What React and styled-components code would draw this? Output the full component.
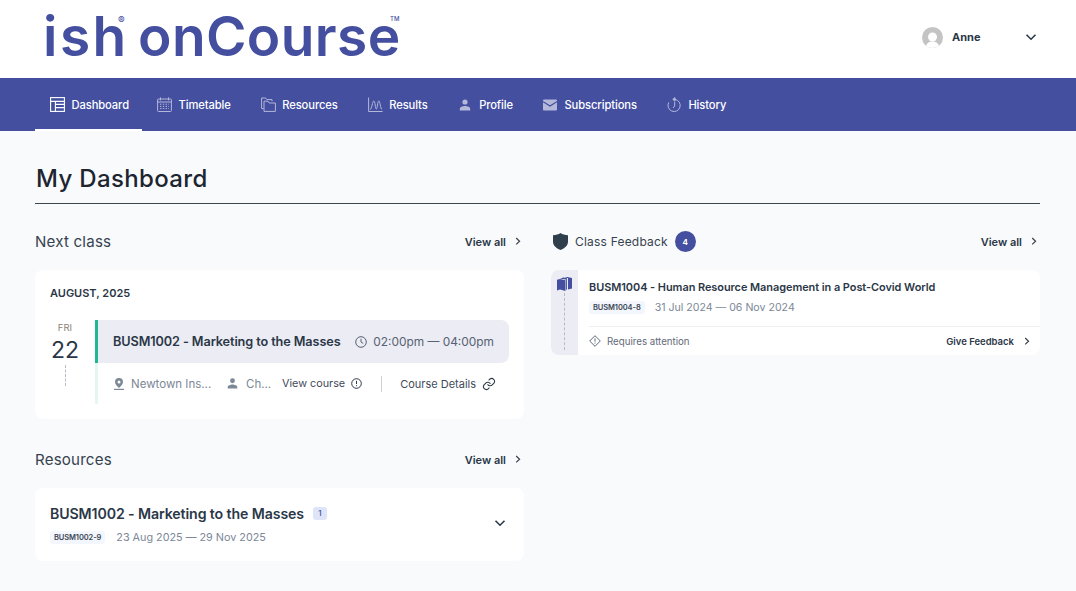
import React from 'react'
import styled, { createGlobalStyle } from 'styled-components'

const indigo = '#444fa0'
const ink = '#2b3747'
const muted = '#7c8797'

const Global = createGlobalStyle`
  html, body { margin: 0; padding: 0; background: #f8fafc; }
  body { font-family: Inter, "Noto Sans", sans-serif; color: ${ink}; }
  * { box-sizing: border-box; }
`

const Page = styled.div`
  width: 1076px;
  height: 591px;
  overflow: hidden;
  background: #f8fafc;
`
const Header = styled.header`
  height: 78px;
  background: #fff;
  display: flex;
  align-items: center;
  justify-content: space-between;
  padding: 0 39px 0 43px;
`
const Logo = styled.div`
  display: flex;
  color: ${indigo};
  font-size: 55px;
  line-height: 72px;
  font-weight: 600;
  height: 78px;
`
const LogoWord = styled.span`
  position: relative;
  display: block;
  width: ${p => p.$w}px;
  letter-spacing: ${p => p.$spacing}px;
  white-space: nowrap;
`
const LogoMark = styled.sup`
  position: absolute;
  left: ${p => p.$left}px;
  top: ${p => p.$top}px;
  font-size: ${p => p.$size}px;
  line-height: 1;
  letter-spacing: 0;
  font-weight: 500;
`
const User = styled.div`
  display: flex;
  align-items: center;
  font-size: 11px;
  font-weight: 700;
  padding-bottom: 4px;
`
const Avatar = styled.div`
  width: 21px;
  height: 21px;
  border-radius: 50%;
  overflow: hidden;
  margin-right: 9px;
  svg { display: block; }
`
const UserName = styled.span`
  width: 73px;
`
const Nav = styled.nav`
  height: 53px;
  background: ${indigo};
  display: flex;
  padding: 0 35px;
`
const NavItem = styled.a`
  display: flex;
  align-items: center;
  gap: 6.5px;
  padding: 0 ${p => (p.$active ? 13 : 15)}px 0 15px;
  color: #fff;
  font-size: 11.2px;
  font-weight: 500;
  letter-spacing: -0.1px;
  border-top: 2px solid transparent;
  border-bottom: 2px solid ${p => (p.$active ? '#fff' : 'transparent')};
`
const NavIcon = styled.span`
  width: 15px;
  height: 16px;
  display: flex;
  align-items: center;
  justify-content: center;
  opacity: ${p => (p.$active ? 1 : 0.6)};
  flex: none;
`
const Main = styled.main`
  padding: 33px 36px 0 35px;
`
const PageTitle = styled.h1`
  margin: 0 0 18px;
  height: 40px;
  border-bottom: 1px solid #3c4552;
  font-size: 24px;
  line-height: 30px;
  font-weight: 500;
  color: #1d2530;
  letter-spacing: 0.35px;
  padding-left: 1px;
`
const Columns = styled.div`
  display: grid;
  grid-template-columns: 489px 489px;
  gap: 27px;
`
const Column = styled.section`
  display: flex;
  flex-direction: column;
`
const SectionHead = styled.div`
  height: 48px;
  padding-bottom: 10px;
  display: flex;
  align-items: center;
  justify-content: space-between;
`
const SectionTitle = styled.h2`
  display: flex;
  align-items: center;
  margin: 0;
  font-size: ${p => p.$size}px;
  line-height: 20px;
  padding-top: 1px;
  font-weight: 400;
  letter-spacing: 0.2px;
  color: #37424f;
  svg { margin: 0 7px 0 2px; }
`
const CountBadge = styled.span`
  width: 21px;
  height: 21px;
  margin-left: 7px;
  border-radius: 50%;
  background: ${indigo};
  color: #fff;
  font-size: 8px;
  font-weight: 700;
  display: flex;
  align-items: center;
  justify-content: center;
`
const ViewAll = styled.a`
  display: flex;
  align-items: center;
  gap: 9px;
  font-size: 11px;
  font-weight: 600;
  color: ${ink};
  padding: 1px 3px 0 0;
`
const Card = styled.div`
  background: #fff;
  border-radius: 8px;
  overflow: hidden;
  margin-bottom: ${p => p.$mb || 0}px;
`
const ClassCard = styled(Card)`
  height: 149px;
  padding: 16px 15px;
`
const Month = styled.div`
  font-size: 11px;
  line-height: 14px;
  font-weight: 600;
  margin-bottom: 20px;
`
const ClassRow = styled.div`
  display: flex;
`
const DateCol = styled.div`
  width: 30px;
  margin-right: 15px;
  display: flex;
  flex-direction: column;
  align-items: center;
`
const Weekday = styled.div`
  font-size: 9.5px;
  line-height: 15px;
  color: #8b7f78;
`
const DayNum = styled.div`
  font-size: 23px;
  line-height: 30px;
  color: ${ink};
`
const DashLine = styled.div`
  border-left: 1px dashed #b6bcc6;
  height: ${p => p.$h}px;
  margin-top: ${p => p.$mt || 0}px;
`
const ClassBody = styled.div`
  width: 414px;
`
const ClassTop = styled.div`
  height: 43px;
  background: #ebecf4;
  border-left: 3px solid #1fb896;
  border-radius: 0 8px 8px 0;
  display: flex;
  align-items: center;
  justify-content: space-between;
  padding: 0 15px;
`
const ClassTitle = styled.div`
  font-size: 12.7px;
  font-weight: 600;
  letter-spacing: -0.1px;
`
const ClassTime = styled.div`
  display: flex;
  align-items: center;
  gap: 6px;
  font-size: 11.9px;
  color: #576272;
`
const ClassBottom = styled.div`
  height: 41px;
  border-left: 3px solid #e5f6f2;
  display: flex;
  align-items: center;
  padding-left: 16px;
  font-size: 11.5px;
`
const Meta = styled.span`
  display: flex;
  align-items: center;
  gap: ${p => p.$gap}px;
  width: ${p => p.$w}px;
  color: ${muted};
  flex: none;
`
const ClassLink = styled.a`
  display: flex;
  align-items: center;
  gap: 6px;
  color: #3f4a5a;
  font-size: ${p => p.$size}px;
  flex: none;
`
const VRule = styled.span`
  width: 1px;
  height: 16px;
  background: #ccd1d9;
  margin: 0 18px 0 19px;
`
const FeedbackCard = styled(Card)`
  height: 85px;
  display: flex;
`
const Strip = styled.div`
  width: 27px;
  background: #ebecf4;
  display: flex;
  flex-direction: column;
  align-items: center;
  padding-top: 7px;
  flex: none;
`
const FeedbackBody = styled.div`
  flex: 1;
  padding-left: 11px;
  display: flex;
  flex-direction: column;
`
const FeedbackInfo = styled.div`
  height: 57px;
  padding-top: 10px;
  border-bottom: 1px solid #eceef1;
`
const FeedbackTitle = styled.div`
  font-size: 10.95px;
  line-height: 14px;
  font-weight: 600;
  letter-spacing: -0.05px;
`
const DateLine = styled.div`
  display: flex;
  align-items: center;
  gap: ${p => p.$gap}px;
  margin-top: ${p => p.$mt}px;
  font-size: ${p => p.$size}px;
  color: ${muted};
`
const Chip = styled.span`
  height: 13px;
  padding: 0 4px;
  border-radius: 3px;
  background: #f3f6fc;
  color: #3b4656;
  font-size: 7.5px;
  line-height: 13px;
  font-weight: 600;
  letter-spacing: -0.1px;
`
const FeedbackFoot = styled.div`
  flex: 1;
  display: flex;
  align-items: center;
  justify-content: space-between;
  padding-right: 10px;
`
const Attention = styled.span`
  display: flex;
  align-items: center;
  gap: 6px;
  font-size: 9.7px;
  color: #5f6a79;
`
const GiveFeedback = styled.a`
  display: flex;
  align-items: center;
  gap: 10px;
  font-size: 9.5px;
  font-weight: 600;
  color: ${ink};
`
const ResourceCard = styled(Card)`
  height: 73px;
  padding: 17px 18px 0 15px;
  display: flex;
  align-items: flex-start;
  justify-content: space-between;
`
const ResourceTitle = styled.div`
  display: flex;
  align-items: center;
  gap: 9px;
  font-size: 14.15px;
  line-height: 18px;
  font-weight: 600;
  letter-spacing: -0.1px;
`
const SmallBadge = styled.span`
  width: 14px;
  height: 13px;
  margin-top: -2px;
  border-radius: 3px;
  background: #dfe5f8;
  color: ${indigo};
  font-size: 8px;
  line-height: 13px;
  font-weight: 500;
  text-align: center;
  letter-spacing: 0;
`
const ChevronSlot = styled.div`
  margin-top: 12px;
  height: 12px;
  svg { display: block; }
`

const Chevron = ({ size = 6 }) => (
  <svg width={size} height={size * 1.4} viewBox="0 0 5 7" fill="none" stroke="#37424f" strokeWidth="1">
    <path d="M1 .8 3.800 3.500 1 6.200" />
  </svg>
)
const ChevronDown = () => (
  <svg width="12" height="12" viewBox="0 0 12 12" fill="none" stroke={ink} strokeWidth="1.600">
    <path d="M1.500 3.800 6 8.200l4.500-4.400" />
  </svg>
)
const IconDashboard = () => (
  <svg width="15" height="15" viewBox="0 0 15 15" fill="none" stroke="#fff" strokeWidth="1.100">
    <rect x=".6" y=".6" width="13.800" height="13.800" />
    <path d="M.6 4.400h13.800M5.400 4.400v10M5.400 7.400h9M5.400 10.600h9" />
  </svg>
)
const IconCalendar = () => (
  <svg width="15" height="15" viewBox="0 0 15 15" fill="none" stroke="#fff" strokeWidth="1">
    <rect x=".6" y="2" width="13.800" height="12.500" rx="1" />
    <path d="M.6 5h13.800M3.500 .4v3M11.500 .4v3" />
    <path d="M3 7.200h9M3 9.400h9M3 11.600h9" strokeDasharray="1.400 1.400" />
  </svg>
)
const IconFolders = () => (
  <svg width="15" height="15" viewBox="0 0 15 15" fill="none" stroke="#fff" strokeWidth="1">
    <path d="M2.500 11.500H.6V1h4l1.200 1.600h5.200v1.600" />
    <path d="M3 14.400V4.200h4l1.200 1.800h6.200v8.400z" />
  </svg>
)
const IconResults = () => (
  <svg width="15" height="15" viewBox="0 0 15 15" fill="none" stroke="#fff" strokeWidth="1">
    <path d="M.6 .5v14h14" />
    <path d="M2 12.500C4 12 4.400 4 5.800 4s1.400 8 2.500 8 1.200-8 2.500-8 1.600 8 3.200 8.500" />
  </svg>
)
const IconPerson = ({ color = '#fff', size = 12 }) => (
  <svg width={size} height={size} viewBox="0 0 12 12" fill={color}>
    <circle cx="6" cy="3" r="2.600" />
    <path d="M.8 11.500V9.800C.8 8 3.800 7 6 7s5.200 1 5.200 2.800v1.700z" />
  </svg>
)
const IconMail = () => (
  <svg width="14" height="12" viewBox="0 0 14 12" fill="#fff">
    <path d="M0 1.500A1 1 0 0 1 1 .5h12a1 1 0 0 1 1 1v.4L7 6.300 0 1.900zM0 3.300v7.200a1 1 0 0 0 1 1h12a1 1 0 0 0 1-1V3.300L7 7.700z" />
  </svg>
)
const IconHistory = () => (
  <svg width="15" height="16" viewBox="0 0 15 16" fill="none" stroke="#fff" strokeWidth="1">
    <path d="M8 2.400a6.100 6.100 0 1 1-6.200 3" />
    <path d="M5.800 2.400 8 .6v3.600z" fill="#fff" />
    <path d="M7.700 5v4L6 11" />
    <path d="M1 8.500h.1M2 11.500h.1M3.200 3.800h.1" />
  </svg>
)
const IconClock = () => (
  <svg width="12" height="12" viewBox="0 0 12 12" fill="none" stroke="#576272" strokeWidth="1">
    <circle cx="6" cy="6" r="5.300" />
    <path d="M6 2.800V6l2.200 1.400" />
  </svg>
)
const IconPin = () => (
  <svg width="10" height="12" viewBox="0 0 10 12">
    <path fill="#7c8797" fillRule="evenodd" d="M5 0a4 4 0 0 1 4 4c0 2.300-2.400 4.600-4 6C3.400 8.600 1 6.300 1 4a4 4 0 0 1 4-4zm0 2.500a1.500 1.500 0 1 0 0 3 1.500 1.500 0 0 0 0-3z" />
    <rect x="0" y="10.800" width="10" height="1.200" fill="#7c8797" />
  </svg>
)
const IconInfo = () => (
  <svg width="11" height="11" viewBox="0 0 11 11" fill="none" stroke="#2b3747" strokeWidth="1">
    <circle cx="5.500" cy="5.500" r="4.800" />
    <path d="M5.500 2.800v3.200M5.500 7.200v1" />
  </svg>
)
const IconLink = () => (
  <svg width="14" height="14" viewBox="0 0 24 24" fill="none" stroke="#2b3747" strokeWidth="1.800" strokeLinecap="round">
    <path d="M10 13a5 5 0 0 0 7.500.5l3-3a5 5 0 0 0-7-7l-1.700 1.700" />
    <path d="M14 11a5 5 0 0 0-7.500-.5l-3 3a5 5 0 0 0 7 7l1.700-1.700" />
  </svg>
)
const IconShield = () => (
  <svg width="15" height="17" viewBox="0 0 15 17" fill="#2f3f4c">
    <path d="M7.500 0C9.500 1.300 12 2.100 15 2.300v6.200c0 3.800-3 6.700-7.500 8.500C3 15.200 0 12.300 0 8.500V2.300C3 2.100 5.500 1.300 7.500 0z" />
  </svg>
)
const IconBooks = () => (
  <svg width="15" height="14" viewBox="0 0 15 14" fill={indigo}>
    <path d="M0 2.800 3 2l5.500 1.300V14L3 12.600 0 13.500z" />
    <path d="M3 1.400 6.500.4l3.400.9v11.200L9 12.800V2.600z" />
    <path d="M7.500.2 10.300 0 15 1v10.400l-4 1.200V1.300z" />
  </svg>
)
const IconDiamond = () => (
  <svg width="12" height="12" viewBox="0 0 12 12" fill="none" stroke="#5f6a79" strokeWidth="1">
    <path d="M6 .7 11.300 6 6 11.300.7 6z" />
    <path d="M6 3.400v3.200M6 7.600v1" />
  </svg>
)
const AvatarImage = () => (
  <svg width="21" height="21" viewBox="0 0 21 21">
    <rect width="21" height="21" fill="#c4c4c4" />
    <circle cx="10.500" cy="10" r="4.500" fill="#fff" />
    <path d="M3.500 21c.5-4.500 3.500-6.500 7-6.500s6.500 2 7 6.500z" fill="#fff" />
  </svg>
)

const navItems = [
  { label: 'Dashboard', icon: <IconDashboard />, active: true },
  { label: 'Timetable', icon: <IconCalendar /> },
  { label: 'Resources', icon: <IconFolders /> },
  { label: 'Results', icon: <IconResults /> },
  { label: 'Profile', icon: <IconPerson /> },
  { label: 'Subscriptions', icon: <IconMail /> },
  { label: 'History', icon: <IconHistory /> },
]

const SectionHeader = ({ title, size = 15.1, children, icon }) => (
  <SectionHead>
    <SectionTitle $size={size}>{icon}{title}{children}</SectionTitle>
    <ViewAll>View all <Chevron /></ViewAll>
  </SectionHead>
)

export default function App() {
  return (
    <Page>
      <Global />
      <Header>
        <Logo>
          <LogoWord $w={95} $spacing={2.5}>
            ish<LogoMark $left={75} $top={15} $size={10}>®</LogoMark>
          </LogoWord>
          <LogoWord $w={270} $spacing={0.4}>
            onCourse<LogoMark $left={252} $top={16} $size={6}>TM</LogoMark>
          </LogoWord>
        </Logo>
        <User>
          <Avatar><AvatarImage /></Avatar>
          <UserName>Anne</UserName>
          <ChevronDown />
        </User>
      </Header>
      <Nav>
        {navItems.map(item => (
          <NavItem key={item.label} $active={item.active}>
            <NavIcon $active={item.active}>{item.icon}</NavIcon>
            {item.label}
          </NavItem>
        ))}
      </Nav>
      <Main>
        <PageTitle>My Dashboard</PageTitle>
        <Columns>
          <Column>
            <SectionHeader title="Next class" />
            <ClassCard $mb={21}>
              <Month>AUGUST, 2025</Month>
              <ClassRow>
                <DateCol>
                  <Weekday>FRI</Weekday>
                  <DayNum>22</DayNum>
                  <DashLine $h={21} />
                </DateCol>
                <ClassBody>
                  <ClassTop>
                    <ClassTitle>BUSM1002 - Marketing to the Masses</ClassTitle>
                    <ClassTime><IconClock />02:00pm — 04:00pm</ClassTime>
                  </ClassTop>
                  <ClassBottom>
                    <Meta $w={113} $gap={7}><IconPin />Newtown Ins...</Meta>
                    <Meta $w={55} $gap={8}><IconPerson color="#7c8797" size={11} />Ch...</Meta>
                    <ClassLink $size={10.8}>View course <IconInfo /></ClassLink>
                    <VRule />
                    <ClassLink $size={11}>Course Details <IconLink /></ClassLink>
                  </ClassBottom>
                </ClassBody>
              </ClassRow>
            </ClassCard>
            <SectionHeader title="Resources" />
            <ResourceCard>
              <div>
                <ResourceTitle>BUSM1002 - Marketing to the Masses <SmallBadge>1</SmallBadge></ResourceTitle>
                <DateLine $gap={11} $mt={8} $size={10.8}>
                  <Chip>BUSM1002-9</Chip>23 Aug 2025 — 29 Nov 2025
                </DateLine>
              </div>
              <ChevronSlot><ChevronDown /></ChevronSlot>
            </ResourceCard>
          </Column>
          <Column>
            <SectionHeader title="Class Feedback" size={12} icon={<IconShield />}>
              <CountBadge>4</CountBadge>
            </SectionHeader>
            <FeedbackCard>
              <Strip>
                <IconBooks />
                <DashLine $h={57} $mt={2} />
              </Strip>
              <FeedbackBody>
                <FeedbackInfo>
                  <FeedbackTitle>BUSM1004 - Human Resource Management in a Post-Covid World</FeedbackTitle>
                  <DateLine $gap={10} $mt={7} $size={10.6}>
                    <Chip>BUSM1004-8</Chip>31 Jul 2024 — 06 Nov 2024
                  </DateLine>
                </FeedbackInfo>
                <FeedbackFoot>
                  <Attention><IconDiamond />Requires attention</Attention>
                  <GiveFeedback>Give Feedback <Chevron /></GiveFeedback>
                </FeedbackFoot>
              </FeedbackBody>
            </FeedbackCard>
          </Column>
        </Columns>
      </Main>
    </Page>
  )
}
